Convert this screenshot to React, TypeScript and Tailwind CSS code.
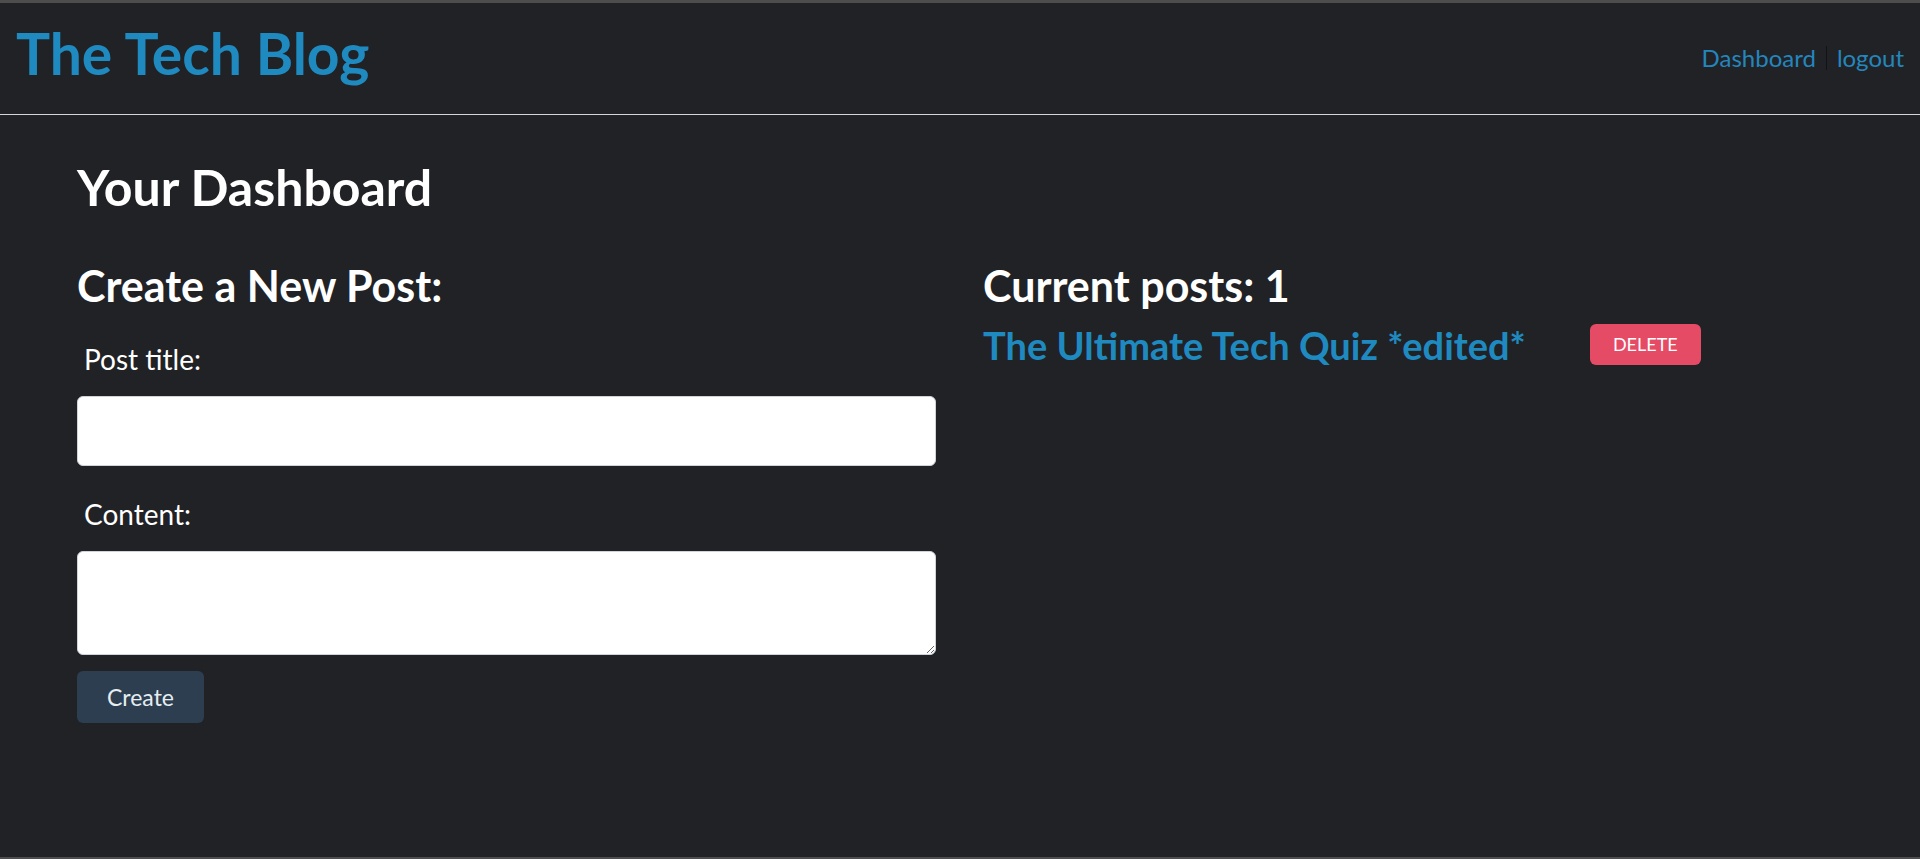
import React from "react";

const Header = () => {
  return (
    <header className="flex h-[112px] items-start justify-between border-b border-[#d6d6d6] px-4">
      <a href="#" className="mt-[22px] text-[57px] font-bold leading-none text-[#1f8ac0]">
        The Tech Blog
      </a>
      <nav className="mt-[43px] flex items-center text-[24px] leading-none text-[#2486bd]">
        <a href="#" className="pr-[10px]">
          Dashboard
        </a>
        <span className="h-[24px] w-px bg-[#121316]"></span>
        <a href="#" className="pl-[10px]">
          logout
        </a>
      </nav>
    </header>
  );
};

const NewPostForm = () => {
  const [title, setTitle] = React.useState("");
  const [content, setContent] = React.useState("");

  return (
    <form className="flex w-[859px] flex-col" onSubmit={(e) => e.preventDefault()}>
      <h2 className="text-[43px] font-bold leading-none text-white">Create a New Post:</h2>
      <label className="mt-[38px] pl-[7px] text-[28px] leading-none text-white" htmlFor="post-title">
        Post title:
      </label>
      <input
        id="post-title"
        type="text"
        value={title}
        onChange={(e) => setTitle(e.target.value)}
        className="mt-[23px] h-[70px] w-full rounded-[6px] border border-[#ced4da] bg-white px-3 text-[22px] text-black focus:outline-none"
      />
      <label className="mt-[34px] pl-[7px] text-[28px] leading-none text-white" htmlFor="post-content">
        Content:
      </label>
      <textarea
        id="post-content"
        value={content}
        onChange={(e) => setContent(e.target.value)}
        className="mt-[23px] h-[104px] w-full rounded-[6px] border border-[#ced4da] bg-white px-3 py-2 text-[22px] text-black focus:outline-none"
      ></textarea>
      <button
        type="submit"
        className="mt-[16px] h-[52px] w-[127px] rounded-[6px] bg-[#2c3e50] text-[23px] text-[#e6edf0]"
      >
        Create
      </button>
    </form>
  );
};

const PostList = () => {
  const posts = [{ id: 1, title: "The Ultimate Tech Quiz *edited*" }];

  return (
    <div className="flex flex-col">
      <h2 className="text-[43px] font-bold leading-none text-white">
        Current posts: {posts.length}
      </h2>
      {posts.map((post) => (
        <div key={post.id} className="mt-[17px] flex items-center gap-[64px]">
          <a href="#" className="text-[38px] font-bold leading-none text-[#1f8ac0]">
            {post.title}
          </a>
          <button className="h-[41px] w-[111px] rounded-[6px] bg-[#e54b65] text-[18px] uppercase text-white">
            Delete
          </button>
        </div>
      ))}
    </div>
  );
};

const App = () => {
  return (
    <div className="h-[859px] overflow-hidden border-t-[3px] border-b-2 border-[#4d4d4d] bg-[#212226] font-['Lato',sans-serif]">
      <Header />
      <main className="px-[77px]">
        <h1 className="mt-[47px] text-[50px] font-bold leading-none text-white">Your Dashboard</h1>
        <div className="mt-[52px] flex gap-[47px]">
          <NewPostForm />
          <PostList />
        </div>
      </main>
    </div>
  );
};

export default App;
